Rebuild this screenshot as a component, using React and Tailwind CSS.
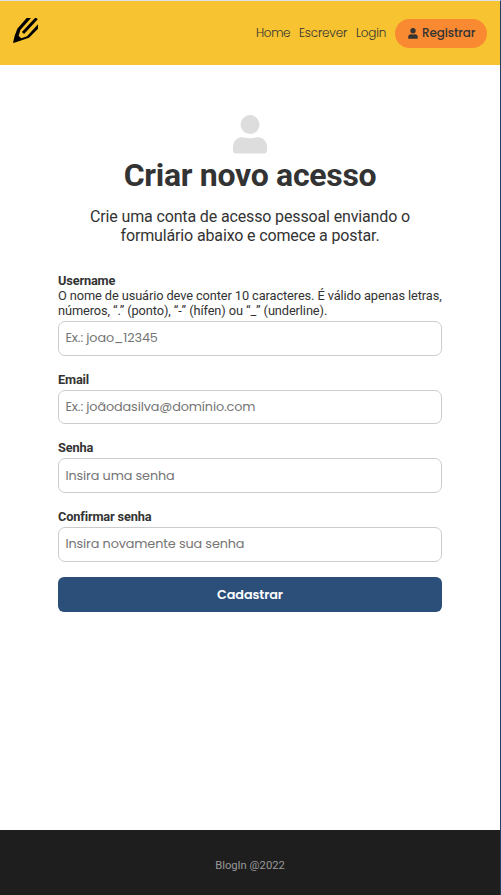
const POP = "font-['Poppins','Inter',sans-serif]";

function Person({ className }) {
  return (
    <svg viewBox="0 0 34 39" className={className} fill="currentColor" aria-hidden="true">
      <circle cx="17" cy="9.6" r="9.5" />
      <path d="M9 22.2C11.5 22.2 13 23.2 17 23.2C21 23.2 22.5 22.2 25 22.2C31 22.2 34 27.5 34 32.5V35.5Q34 38.5 31 38.5H3Q0 38.5 0 35.5V32.5C0 27.5 3 22.2 9 22.2Z" />
    </svg>
  );
}

function Pencil() {
  return (
    <svg viewBox="0 0 75 75" className="h-[25px] w-[25px]" aria-hidden="true">
      <path d="M0 75L5 53L13 32L41 0H54L22 36L17 54L25 61L42 55L75 19V32L48 59L11 72Z" />
      <path d="M30 45L71 1" fill="none" stroke="#000" strokeWidth="9" />
    </svg>
  );
}

function Field({ label, hint, placeholder }) {
  return (
    <label className="block">
      <span className="block text-[12.8px] leading-[15px] font-bold tracking-[-0.17px]">{label}</span>
      {hint && <span className="block text-[12.8px] leading-[15px] tracking-[-0.1px] whitespace-nowrap">{hint}</span>}
      <input
        placeholder={placeholder}
        className={`mt-[3.2px] block h-[34.6px] w-full rounded-[7px] border border-[#ccc] bg-white px-[6.4px] text-[12.8px] tracking-[-0.12px] placeholder:text-[#757575] ${POP}`}
      />
    </label>
  );
}

export default function App() {
  return (
    <div className="flex h-[895px] w-[501px] flex-col overflow-hidden border-t border-r border-t-[#dfe3e8] border-r-[#24405c] bg-white font-['Roboto',sans-serif] text-[#333]">
      <header className="flex h-16 shrink-0 items-center justify-between bg-[#f7c331] pr-[13px] pl-[13px]">
        <div className="-mt-[5px]"><Pencil /></div>
        <nav className={`flex items-center text-[12px] ${POP}`}>
          <a className="mr-[9px] w-[34px] font-light tracking-[-0.35px] whitespace-nowrap">Home</a>
          <a className="mr-[9px] w-[48px] font-light tracking-[-0.2px] whitespace-nowrap">Escrever</a>
          <a className="mr-[9px] w-[30px] font-light tracking-[-0.2px] whitespace-nowrap">Login</a>
          <a className="flex h-[29px] w-[92px] items-center rounded-full bg-[#fa8a31] pl-[13px] font-medium tracking-[-0.15px] whitespace-nowrap">
            <Person className="mr-1 h-[11px] w-[10px]" />
            Registrar
          </a>
        </nav>
      </header>
      <main className="flex-1 px-[58px] pt-[50px]">
        <Person className="mx-auto h-[39px] w-[34px] text-[#ddd]" />
        <h1 className="mt-[2px] text-center text-[32px] leading-[38px] font-bold tracking-[-0.3px]">Criar novo acesso</h1>
        <p className="mt-[13px] text-center text-[16px] leading-[19px] tracking-[-0.14px]">
          Crie uma conta de acesso pessoal enviando o
          <br />
          formulário abaixo e comece a postar.
        </p>
        <form className="mt-[28px] flex flex-col gap-[15.8px]">
          <Field
            label="Username"
            hint={<>O nome de usuário deve conter 10 caracteres. É válido apenas letras,<br />números, “.” (ponto), “-” (hífen) ou “_” (underline).</>}
            placeholder="Ex.: joao_12345"
          />
          <Field label="Email" placeholder="Ex.: joãodasilva@domínio.com" />
          <Field label="Senha" placeholder="Insira uma senha" />
          <Field label="Confirmar senha" placeholder="Insira novamente sua senha" />
          <button type="button" className={`-mt-[0.4px] h-[35px] rounded-[6px] bg-[#2b4f79] text-[12.8px] font-semibold tracking-[-0.1px] text-white ${POP}`}>
            Cadastrar
          </button>
        </form>
      </main>
      <footer className="flex h-[65px] shrink-0 items-center justify-center bg-[#1e1e1e] pt-[7px] text-[11.2px] text-[#999]">
        BlogIn @2022
      </footer>
    </div>
  );
}
